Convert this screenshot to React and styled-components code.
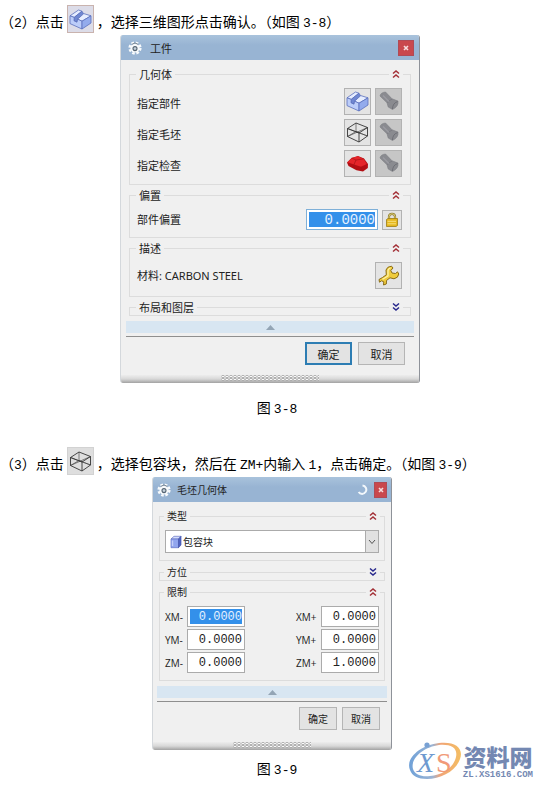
import styled, { createGlobalStyle } from "styled-components"

const GlobalStyle = createGlobalStyle`
  * {
    box-sizing: border-box;
  }
  body {
    margin: 0;
    background-color: #FFF;
    color: #000;
    font-family: "Noto Sans CJK SC", sans-serif;
  }
  button, input, select {
    font-family: inherit;
    margin: 0;
    padding: 0;
  }
  svg {
    display: block;
    flex-shrink: 0;
  }
`
const Page = styled.main`
  position: relative;
  display: flex;
  flex-direction: column;
  padding: 5px 0 6px;
`
const Step = styled.p`
  display: flex;
  align-items: flex-end;
  gap: 3px;
  margin: 0;
  padding-bottom: 2px;
  font-size: 14px;
  line-height: 18px;
  white-space: nowrap;
`
const StepIcon = styled.span`
  display: flex;
  justify-content: center;
  align-items: center;
  width: 27px;
  height: 28px;
  background-color: ${({ $tint }) => $tint};
  border: 1px solid ${({ $edge }) => $edge};
`
const Latin = styled.span`
  font-family: "Liberation Mono", monospace;
  font-size: 13px;
`
const Figure = styled.figure`
  display: flex;
  flex-direction: column;
  align-items: center;
  margin: 0;
  padding-left: ${({ $compact }) => ($compact ? "4px" : "0")};
`
const Caption = styled.figcaption`
  padding: ${({ $compact }) => ($compact ? "7px 0 0 10px" : "13px 0 0 14px")};
  font-size: 14px;
  line-height: 22px;
`
const Spacer = styled.div`
  height: 26px;
`
const Dialog = styled.section`
  width: 100%;
  max-width: ${({ $compact }) => ($compact ? "240px" : "300px")};
  font-size: ${({ $compact }) => ($compact ? "10px" : "11px")};
  line-height: 16px;
  color: #222;
  background-color: #F0F0F0;
  border-left: 1px solid #D4D8DC;
  border-right: 1px solid #8E9299;
  border-radius: 3px;
  overflow: hidden;
`
const TitleBar = styled.header`
  display: flex;
  align-items: center;
  gap: ${({ $compact }) => ($compact ? "6px" : "8px")};
  height: 25px;
  padding: ${({ $compact }) => ($compact ? "0 4px" : "0 5px 0 7px")};
  background: linear-gradient(#A9C3DC, #98B4D3 40%, #98B4D3);
`
const Title = styled.h2`
  flex: 1;
  margin: 0;
  font-size: inherit;
  font-weight: 400;
`
const CloseButton = styled.button`
  display: flex;
  justify-content: center;
  align-items: center;
  width: ${({ $compact }) => ($compact ? "13px" : "16px")};
  height: 16px;
  background-color: #C9484D;
  border: 1px solid #B04A55;
`
const DialogBody = styled.div`
  display: flex;
  flex-direction: column;
  gap: ${({ $compact }) => ($compact ? "11px" : "10px")};
  padding: ${({ $compact }) => ($compact ? "14px 6px 5px" : "14px 8px 5px")};
`
const GroupBox = styled.section`
  border: 1px solid #DCDCDC;
`
const GroupHeader = styled.header`
  display: flex;
  justify-content: space-between;
  align-items: center;
  height: 16px;
  margin-top: -9px;
  padding: ${({ $compact }) => ($compact ? "0 4px" : "0 7px 0 6px")};
`
const GroupTitle = styled.h3`
  margin: 0;
  padding: 0 3px;
  font-size: inherit;
  font-weight: 400;
  background-color: #F0F0F0;
`
const ToggleButton = styled.button`
  padding: 0 3px;
  background-color: #F0F0F0;
  border: none;
`
const GroupContent = styled.div`
  display: flex;
  flex-direction: column;
  gap: 4px;
  padding: ${({ $compact }) => ($compact ? "6px 5px 7px" : "6px 8px 7px 7px")};
`
const Row = styled.div`
  display: flex;
  align-items: center;
  gap: 4px;
`
const RowLabel = styled.label`
  flex: 1;
  padding-top: ${({ $low }) => ($low ? "4px" : "0")};
  font-family: "Noto Sans", "Noto Sans CJK SC", sans-serif;
`
const IconButton = styled.button`
  display: flex;
  justify-content: center;
  align-items: center;
  width: ${({ $small }) => ($small ? "20px" : "27px")};
  height: ${({ $small }) => ($small ? "20px" : "27px")};
  background-color: ${({ $dim }) => ($dim ? "#C6C6C6" : "#E4E4E4")};
  border: 1px solid #B2B2B2;
`
const NumberBox = styled.span`
  display: flex;
  width: ${({ $compact }) => ($compact ? "58px" : "72px")};
  height: 21px;
  padding: 2px;
  background-color: #FFF;
  border: 1px solid ${({ $compact }) => ($compact ? "#ABABAB" : "#7FB0D8")};
`
const NumberInput = styled.input`
  width: 100%;
  border: none;
  outline: none;
  text-align: right;
  font-family: "Liberation Mono", monospace;
  font-size: ${({ $compact }) => ($compact ? "12px" : "14px")};
  color: ${({ $selected }) => ($selected ? "#E4F1FF" : "#222")};
  background-color: ${({ $selected }) => ($selected ? "#3390EA" : "transparent")};
`
const LimitsGrid = styled.div`
  display: grid;
  grid-template-columns: 1fr 1fr;
  row-gap: 2px;
`
const LimitField = styled.div`
  display: flex;
  justify-content: ${({ $end }) => ($end ? "flex-end" : "flex-start")};
  align-items: center;
  gap: 3px;
`
const LimitLabel = styled.label`
  width: ${({ $end }) => ($end ? "22px" : "19px")};
  font-family: "Open Sans", sans-serif;
  white-space: nowrap;
`
const SelectBox = styled.div`
  display: flex;
  align-items: center;
  height: 23px;
  padding-left: 4px;
  background-color: #FFF;
  border: 1px solid #ABABAB;
`
const TypeSelect = styled.select`
  flex: 1;
  height: 100%;
  padding-left: 1px;
  appearance: none;
  background-color: transparent;
  border: none;
  font-size: inherit;
  color: inherit;
`
const SelectArrow = styled.span`
  display: flex;
  justify-content: center;
  align-items: center;
  width: 13px;
  height: 100%;
  background-color: #E1E1E1;
  border-left: 1px solid #ABABAB;
`
const CollapseStrip = styled.button`
  display: flex;
  justify-content: center;
  align-items: center;
  width: ${({ $compact }) => ($compact ? "calc(100% - 8px)" : "calc(100% - 10px)")};
  height: 12px;
  margin: ${({ $compact }) => ($compact ? "0 4px" : "0 5px")};
  background-color: #D8E6F2;
  border: none;
`
const Footer = styled.footer`
  display: flex;
  justify-content: flex-end;
  gap: ${({ $compact }) => ($compact ? "5px" : "6px")};
  margin: ${({ $compact }) => ($compact ? "3px 4px 0" : "3px 5px 0")};
  padding: ${({ $compact }) => ($compact ? "5px 7px 12px" : "5px 9px 10px")};
  border-top: 1px solid #8F8F8F;
`
const ActionButton = styled.button`
  width: ${({ $compact }) => ($compact ? "38px" : "47px")};
  height: 23px;
  font-size: inherit;
  line-height: 16px;
  color: #222;
  background-color: #E3E3E3;
  border: ${({ $primary }) => ($primary ? "2px solid #2D7DB3" : "1px solid #B5B5B5")};
`
const Grip = styled.div`
  display: flex;
  justify-content: center;
  height: 8px;
  background: linear-gradient(#EDEDED, #D8D8D8 50%, #A2A2A2);
`
const GripDots = styled.span`
  width: 33%;
  height: 6px;
  background-image: radial-gradient(circle, #FAFAFA 1px, #ABABAB 1px, transparent 2px);
  background-size: 4px 3px;
`
const Watermark = styled.div`
  position: absolute;
  right: 7px;
  bottom: 6px;
  display: flex;
  align-items: center;
`
const WatermarkText = styled.div`
  display: flex;
  flex-direction: column;
  align-items: center;
  color: #7488B2;
`
const WatermarkName = styled.span`
  font-size: 23px;
  font-weight: 900;
  line-height: 28px;
`
const WatermarkUrl = styled.span`
  font-family: "Liberation Mono", monospace;
  font-size: 9px;
  font-weight: 700;
  line-height: 10px;
`

const GearIcon = () => (
  <svg width="14" height="14" viewBox="0 0 14 14">
    <circle cx="7" cy="7" r="5.4" fill="none" stroke="#F7FAFC" strokeWidth="2.4" strokeDasharray="2.6 1.64" />
    <circle cx="7" cy="7" r="4.6" fill="#F7FAFC" />
    <circle cx="7" cy="7.6" r="2" fill="#C6D2DC" stroke="#566573" strokeWidth="1.1" />
    <path d="M3.8 3.4 A4.8 4.8 0 0 1 10.2 3.4" fill="none" stroke="#6F7E8C" strokeWidth="1" />
  </svg>
)
const PartIcon = () => (
  <svg width="23" height="21" viewBox="0 0 23 21">
    <g stroke="#5A70BC" strokeWidth="0.8" strokeLinejoin="round">
      <path d="M1 6.8 L9.5 1 L13 2.2 L5.2 8.4 Z" fill="#E6EDFF" />
      <path d="M13 2.2 L14.6 5 L8.6 10.2 L8 13.2 L5 11.8 L5.2 8.4 Z" fill="#7088D2" />
      <path d="M8.6 10.2 L14.8 4.6 L22 6.8 L13 12.2 Z" fill="#E6EDFF" />
      <path d="M1 6.8 L5.2 8.4 L5 11.8 L8 13.2 L8.6 10.2 L13 12.2 V20 L1 14.6 Z" fill="#BCCDF9" />
      <path d="M13 12.2 L22 6.8 V14 L13 20 Z" fill="#93ABEC" />
    </g>
  </svg>
)
const BlankIcon = () => (
  <svg width="23" height="21" viewBox="0 0 23 21" fill="none" stroke="#343434" strokeWidth="0.9" strokeLinejoin="round">
    <path d="M1.5 6.5 L10 1 L21.5 5.5 L13 11 Z M1.5 6.5 V14.5 L13 20 L21.5 14 V5.5 M13 11 V20" />
    <path d="M10 1 V9.5 M1.5 14.5 L10 9.5 L21.5 14 M1.5 6.5 L21.5 14 M1.5 14.5 L21.5 5.5" strokeWidth="0.6" />
  </svg>
)
const CheckIcon = () => (
  <svg width="23" height="19" viewBox="0 0 23 19">
    <path d="M1 8.5 L5.5 4 L12 2 L18 4.5 L22 10 L21.8 14 L17 17.5 L10.5 16.2 L2.5 12 Z" fill="#B50E14" />
    <path d="M1.5 8.3 L5.8 4 L12 2.3 L17.5 4.8 L20.8 10 L15 12.8 L8 10.5 Z" fill="#E5252A" />
    <path d="M8 10.5 L10 6 L17.5 4.8 M10 6 L5.8 4 M15 12.8 L16 16.8 M8 10.5 V14" fill="none" stroke="#A51217" strokeWidth="0.7" />
  </svg>
)
const FlashlightIcon = () => (
  <svg width="23" height="23" viewBox="0 0 23 23" strokeLinejoin="round">
    <path d="M3 6 Q3.5 2.5 8.5 2 L15 8.8 L21 11 Q21.8 16.5 15.5 19.5 L11.2 17 L10 12.8 Z" fill="#8A8B90" stroke="#7C7D83" strokeWidth="0.6" />
    <path d="M20.5 11.6 Q15.8 13 15.4 19" fill="none" stroke="#6B6C73" strokeWidth="0.9" />
    <path d="M10.4 13 Q11.4 10.4 15 9.2" fill="none" stroke="#75767C" strokeWidth="0.7" />
    <path d="M6 5.5 L12 11.5" stroke="#9C9CA2" strokeWidth="1.2" />
  </svg>
)
const LockIcon = () => (
  <svg width="14" height="16" viewBox="0 0 14 16">
    <path d="M4 7.5 V4.5 Q4 1.8 7 1.8 Q10 1.8 10 4.5 V7.5" fill="none" stroke="#8B7A2B" strokeWidth="2.2" />
    <path d="M4 7.5 V4.5 Q4 1.8 7 1.8 Q10 1.8 10 4.5 V7.5" fill="none" stroke="#E9D98A" strokeWidth="0.9" />
    <path d="M1.5 7.5 L3 6.5 H12.5 V13.5 L11 14.5 H1.5 Z" fill="#E6B81E" stroke="#9C7C15" strokeWidth="0.8" />
    <path d="M2.5 9.3 H11 M2.5 11.8 H11" stroke="#F8E58A" strokeWidth="0.9" />
  </svg>
)
const WrenchIcon = () => (
  <svg width="23" height="23" viewBox="0 0 23 23">
    <path
      d="M2 15.5 L5.5 13.5 L9.3 10.8 L9 6 Q10 2.5 14.5 2.2 L16 4 L13.8 6.5 L15 9 L18.5 9.5 L20.5 7.8 L21.8 10 Q21.3 14 17 14.8 L13 13.8 L9.5 16.5 L9.3 20 L6.5 21 L6.8 17.8 L4.5 16.8 L2.5 18.2 Z"
      fill="#EFCB3D" stroke="#8A6C17" strokeWidth="1" strokeLinejoin="round"
    />
    <path d="M5.5 15.3 L11 12 L11 6.5 Q11.5 4.5 13.5 3.8" fill="none" stroke="#FFF4A8" strokeWidth="1.3" />
  </svg>
)
const BlockIcon = () => (
  <svg width="12" height="14" viewBox="0 0 12 14" strokeLinejoin="round">
    <path d="M1 4 L4 1.3 H11 L8.5 4 Z" fill="#D5DDFC" stroke="#6474C4" strokeWidth="0.7" />
    <path d="M1 4 H8.5 V12.7 H1 Z" fill="#91A5EE" stroke="#6474C4" strokeWidth="0.7" />
    <path d="M8.5 4 L11 1.3 V10 L8.5 12.7 Z" fill="#4F62C2" stroke="#4656AC" strokeWidth="0.7" />
    <path d="M2.5 5.5 V11" stroke="#C3CEFA" strokeWidth="1.4" />
  </svg>
)
const ChevronsIcon = ({ down }) => (
  <svg width="8" height="10" viewBox="0 0 8 10" fill="none" stroke={down ? "#27278C" : "#A32F36"} strokeWidth="1.5">
    <path d={down ? "M1 1.5 L4 4 L7 1.5 M1 5.5 L4 8 L7 5.5" : "M1 4.5 L4 2 L7 4.5 M1 8.5 L4 6 L7 8.5"} />
  </svg>
)
const CrossIcon = () => (
  <svg width="6" height="6" viewBox="0 0 6 6" stroke="#F7DCDD" strokeWidth="1.6">
    <path d="M1 1 L5 5 M5 1 L1 5" />
  </svg>
)
const ResetIcon = () => (
  <svg width="11" height="12" viewBox="0 0 11 12" fill="none" stroke="#F2F7FB" strokeWidth="2">
    <path d="M5.5 1.5 A4.2 4.2 0 1 1 1.6 8" />
  </svg>
)
const LogoIcon = () => (
  <svg width="56" height="42" viewBox="0 0 56 42">
    <defs>
      <linearGradient id="ring" x1="0" y1="0" x2="1" y2="0">
        <stop offset="0" stopColor="#6FA1D8" />
        <stop offset="0.45" stopColor="#9BB4D4" />
        <stop offset="0.6" stopColor="#F0A477" />
        <stop offset="1" stopColor="#F4BE62" />
      </linearGradient>
    </defs>
    <path
      fillRule="evenodd"
      fill="url(#ring)"
      d="M3 30 C-2 18 14 5 32 3 C48 1 57 8 53 19 C49 31 34 39 20 39 C11 39 5 36 3 30 Z M6 29 C8 35 15 37 23 36 C36 35 47 27 49 17 C51 8 44 4 32 5 C17 7 3 18 6 29 Z"
    />
    <circle cx="20" cy="5" r="2.6" fill="#78A1D4" />
    <text x="10" y="32" fontFamily="Liberation Serif, serif" fontStyle="italic" fontSize="28" fill="#6E9AD0">X</text>
    <text x="29" y="32" fontFamily="Liberation Serif, serif" fontSize="28" fill="#F19A78">S</text>
  </svg>
)

const Group = ({ title, compact, collapsed, children }) => {
  return (
    <GroupBox>
      <GroupHeader $compact={compact}>
        <GroupTitle>{title}</GroupTitle>
        <ToggleButton type="button" aria-label={title} aria-expanded={!collapsed}>
          <ChevronsIcon down={collapsed} />
        </ToggleButton>
      </GroupHeader>
      {children && <GroupContent $compact={compact}>{children}</GroupContent>}
    </GroupBox>
  )
}

const DialogWindow = ({ title, compact, extra, children }) => {
  return (
    <Dialog $compact={compact}>
      <TitleBar $compact={compact}>
        <GearIcon />
        <Title>{title}</Title>
        {extra}
        <CloseButton type="button" aria-label="关闭" $compact={compact}>
          <CrossIcon />
        </CloseButton>
      </TitleBar>
      <DialogBody $compact={compact}>{children}</DialogBody>
      <CollapseStrip type="button" aria-label="收起" $compact={compact}>
        <svg width="9" height="5" viewBox="0 0 9 5">
          <path d="M0 5 L4.5 0 L9 5 Z" fill="#94A5B5" />
        </svg>
      </CollapseStrip>
      <Footer $compact={compact}>
        <ActionButton type="button" $compact={compact} $primary={!compact}>确定</ActionButton>
        <ActionButton type="button" $compact={compact}>取消</ActionButton>
      </Footer>
      <Grip>
        <GripDots />
      </Grip>
    </Dialog>
  )
}

const geometryRows = [
  { id: "part", label: "指定部件", icon: <PartIcon /> },
  { id: "blank", label: "指定毛坯", icon: <BlankIcon /> },
  { id: "check", label: "指定检查", icon: <CheckIcon /> },
]

const limits = [
  { name: "XM-", value: "0.0000", selected: true },
  { name: "XM+", value: "0.0000", end: true },
  { name: "YM-", value: "0.0000" },
  { name: "YM+", value: "0.0000", end: true },
  { name: "ZM-", value: "0.0000" },
  { name: "ZM+", value: "1.0000", end: true },
]

const WorkpieceDialog = () => {
  return (
    <DialogWindow title="工件">
      <Group title="几何体">
        {geometryRows.map(({ id, label, icon }) => (
          <Row key={id}>
            <RowLabel htmlFor={id} $low>{label}</RowLabel>
            <IconButton type="button" id={id}>{icon}</IconButton>
            <IconButton type="button" aria-label="显示" $dim>
              <FlashlightIcon />
            </IconButton>
          </Row>
        ))}
      </Group>
      <Group title="偏置">
        <Row>
          <RowLabel htmlFor="offset">部件偏置</RowLabel>
          <NumberBox>
            <NumberInput id="offset" type="text" defaultValue="0.0000" $selected />
          </NumberBox>
          <IconButton type="button" aria-label="锁定" $small>
            <LockIcon />
          </IconButton>
        </Row>
      </Group>
      <Group title="描述">
        <Row>
          <RowLabel htmlFor="material">材料: CARBON STEEL</RowLabel>
          <IconButton type="button" id="material">
            <WrenchIcon />
          </IconButton>
        </Row>
      </Group>
      <Group title="布局和图层" collapsed />
    </DialogWindow>
  )
}

const BlankDialog = () => {
  return (
    <DialogWindow title="毛坯几何体" compact extra={<ResetIcon />}>
      <Group title="类型" compact>
        <SelectBox>
          <BlockIcon />
          <TypeSelect aria-label="类型">
            <option>包容块</option>
          </TypeSelect>
          <SelectArrow>
            <svg width="8" height="6" viewBox="0 0 8 6" fill="none" stroke="#555">
              <path d="M1 1 L4 4.5 L7 1" />
            </svg>
          </SelectArrow>
        </SelectBox>
      </Group>
      <Group title="方位" compact collapsed />
      <Group title="限制" compact>
        <LimitsGrid>
          {limits.map(({ name, value, selected, end }) => (
            <LimitField key={name} $end={end}>
              <LimitLabel htmlFor={name} $end={end}>{name}</LimitLabel>
              <NumberBox $compact>
                <NumberInput id={name} type="text" defaultValue={value} $compact $selected={selected} />
              </NumberBox>
            </LimitField>
          ))}
        </LimitsGrid>
      </Group>
    </DialogWindow>
  )
}

export default function App() {
  return (
    <>
      <GlobalStyle />
      <Page>
        <Step>
          <span>（<Latin>2</Latin>）点击</span>
          <StepIcon $tint="#DCDCE8" $edge="#C9B3AE">
            <PartIcon />
          </StepIcon>
          <span>，选择三维图形点击确认。（如图 <Latin>3-8</Latin>）</span>
        </Step>
        <Figure>
          <WorkpieceDialog />
          <Caption>图 <Latin>3-8</Latin></Caption>
        </Figure>
        <Spacer />
        <Step>
          <span>（<Latin>3</Latin>）点击</span>
          <StepIcon $tint="#DEDEDE" $edge="#D2D2D2">
            <BlankIcon />
          </StepIcon>
          <span>
            ，选择包容块，然后在 <Latin>ZM+</Latin>内输入 <Latin>1</Latin>，点击确定。（如图 <Latin>3-9</Latin>）
          </span>
        </Step>
        <Figure $compact>
          <BlankDialog />
          <Caption $compact>图 <Latin>3-9</Latin></Caption>
        </Figure>
        <Watermark>
          <LogoIcon />
          <WatermarkText>
            <WatermarkName>资料网</WatermarkName>
            <WatermarkUrl>ZL.XS1616.COM</WatermarkUrl>
          </WatermarkText>
        </Watermark>
      </Page>
    </>
  )
}
